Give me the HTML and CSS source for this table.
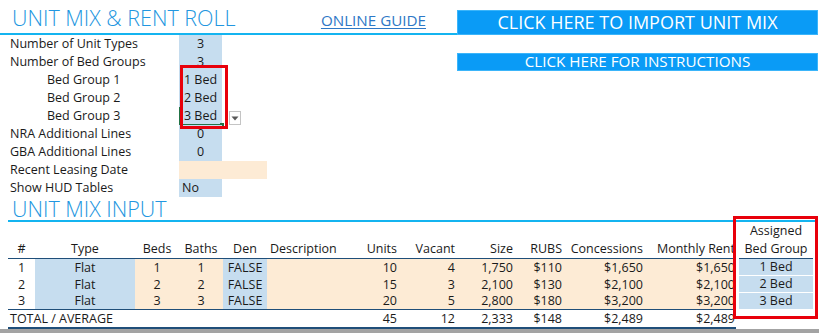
FILE: index.html
```html
<!DOCTYPE html>
<html>
<head>
<meta charset="utf-8">
<link rel="stylesheet" href="styles.css">
</head>
<body>
<div class="sheet">
  <div class="top">
    <div class="title-wrap">
      <h1 class="title">UNIT MIX &amp; RENT ROLL</h1>
      <a class="guide">ONLINE GUIDE</a>
    </div>
    <div class="btn btn-import">CLICK HERE TO IMPORT UNIT MIX</div>
  </div>

  <div class="params">
    <div class="param-grid">
      <div class="lbl">Number of Unit Types</div><div class="val blue">3</div><div></div>
      <div class="lbl">Number of Bed Groups</div><div class="val blue">3</div><div></div>
      <div class="lbl ind">Bed Group 1</div><div class="val blue">1 Bed</div><div></div>
      <div class="lbl ind">Bed Group 2</div><div class="val blue">2 Bed</div><div></div>
      <div class="lbl ind">Bed Group 3</div><div class="val blue active">3 Bed<span class="handle"></span></div><div></div>
      <div class="lbl">NRA Additional Lines</div><div class="val blue">0</div><div></div>
      <div class="lbl">GBA Additional Lines</div><div class="val blue">0</div><div></div>
      <div class="lbl">Recent Leasing Date</div><div class="val peach span2"></div>
      <div class="lbl">Show HUD Tables</div><div class="val blue left">No</div><div></div>
    </div>
    <div class="btn btn-instr">CLICK HERE FOR INSTRUCTIONS</div>
  </div>

  <h2 class="title2">UNIT MIX INPUT</h2>

  <div class="tbl">
    <div class="c sp" style="grid-column: 1 / 13"></div><div class="c"></div><div class="c ctr sp">Assigned</div>

    <div class="c h ctr">#</div><div class="c h ctr">Type</div><div class="c h ctr">Beds</div><div class="c h ctr">Baths</div><div class="c h ctr">Den</div><div class="c h desc">Description</div><div class="c h r">Units</div><div class="c h r">Vacant</div><div class="c h r">Size</div><div class="c h r">RUBS</div><div class="c h r">Concessions</div><div class="c h r last">Monthly Rent</div><div class="c"></div><div class="c h ctr">Bed Group</div>

    <div class="c ctr">1</div><div class="c ctr blue">Flat</div><div class="c ctr peach">1</div><div class="c ctr peach">1</div><div class="c ctr blue">FALSE</div><div class="c peach"></div><div class="c r peach">10</div><div class="c r peach">4</div><div class="c r peach">1,750</div><div class="c r peach">$110</div><div class="c r peach">$1,650</div><div class="c r peach last">$1,650</div><div class="c"></div><div class="c ctr blue sep">1 Bed</div>

    <div class="c ctr">2</div><div class="c ctr blue">Flat</div><div class="c ctr peach">2</div><div class="c ctr peach">2</div><div class="c ctr blue">FALSE</div><div class="c peach"></div><div class="c r peach">15</div><div class="c r peach">3</div><div class="c r peach">2,100</div><div class="c r peach">$130</div><div class="c r peach">$2,100</div><div class="c r peach last">$2,100</div><div class="c"></div><div class="c ctr blue sep">2 Bed</div>

    <div class="c ctr b3">3</div><div class="c ctr blue b3">Flat</div><div class="c ctr peach b3">3</div><div class="c ctr peach b3">3</div><div class="c ctr blue b3">FALSE</div><div class="c peach b3"></div><div class="c r peach b3">20</div><div class="c r peach b3">5</div><div class="c r peach b3">2,800</div><div class="c r peach b3">$180</div><div class="c r peach b3">$3,200</div><div class="c r peach b3 last">$3,200</div><div class="c"></div><div class="c ctr blue b3w">3 Bed</div>

    <div class="c tot totlbl" style="grid-column: 1 / 7">TOTAL / AVERAGE</div><div class="c r tot">45</div><div class="c r tot">12</div><div class="c r tot">2,333</div><div class="c r tot">$148</div><div class="c r tot">$2,489</div><div class="c r tot last">$2,489</div><div class="c"></div><div class="c"></div>
  </div>

  <div class="gray"></div>

  <div class="redbox rb1"></div>
  <div class="dropdown"><svg width="8" height="5" viewBox="0 0 8 5"><path d="M0.5 0.5 L7.5 0.5 L4 4.5 Z" fill="#595959"/></svg></div>
  <div class="redbox rb2"></div>
</div>
</body>
</html>
```

FILE: styles.css
```css
* { box-sizing: border-box; }
html, body { margin: 0; padding: 0; background: #fff; }
body {
  font-family: "Open Sans", "Noto Sans", sans-serif;
  font-size: 12.5px;
  color: #1a1a1a;
}
.sheet {
  position: relative;
  width: 819px;
  height: 333px;
  overflow: hidden;
}

.top {
  display: flex;
  height: 35px;
}
.title-wrap {
  width: 457px;
  height: 35px;
  border-bottom: 2px solid #14b4f0;
  display: flex;
  align-items: flex-end;
}
.title {
  margin: 0 0 0 12px;
  font-size: 21.5px;
  font-weight: 350;
  color: #2296e0;
  line-height: 30px;
}
.guide {
  margin-left: auto;
  margin-right: 31px;
  margin-bottom: 3px;
  font-size: 15.2px;
  color: #2e78c6;
  text-decoration: underline;
  text-decoration-thickness: 1px;
  text-underline-offset: 2px;
  line-height: 20px;
}
.btn {
  background: #0a9bf6;
  border: 1px solid #3bb5fa;
  color: #fff;
  text-align: center;
  font-weight: 400;
  white-space: nowrap;
}
.btn-import {
  width: 361px;
  height: 25px;
  margin-top: 10px;
  font-size: 18px;
  line-height: 22px;
}

.params {
  display: flex;
}
.param-grid {
  display: grid;
  grid-template-columns: 179px 43px 45px;
  grid-auto-rows: 18px;
  width: 457px;
}
.lbl {
  padding-left: 10px;
  line-height: 18px;
  white-space: nowrap;
}
.lbl.ind { padding-left: 47px; }
.val {
  line-height: 18px;
  text-align: center;
  position: relative;
}
.val.left { text-align: left; padding-left: 3px; }
.span2 { grid-column: span 2; }
.blue { background: #c6ddef; }
.peach { background: #fdebd5; }
.active {
  box-shadow: inset 2px 0 0 #217346, inset 0 -1px 0 #217346;
}
.handle {
  position: absolute;
  right: -2px;
  bottom: -2px;
  width: 4px;
  height: 4px;
  background: #217346;
}
.btn-instr {
  width: 361px;
  height: 18px;
  margin-top: 18px;
  font-size: 15.2px;
  line-height: 15px;
}

.title2 {
  margin: 0 0 0 8px;
  width: 807px;
  height: 25px;
  padding-left: 4px;
  border-bottom: 2px solid #14b4f0;
  font-size: 21.5px;
  font-weight: 350;
  color: #2296e0;
  line-height: 23px;
}

.tbl {
  display: grid;
  margin-left: 8px;
  grid-template-columns: 27px 100px 44px 44px 44px 78px 55px 58px 58px 49px 81px 90px 3px 74px;
  grid-template-rows: 18px 19px 17px 17px 17px 19px;
}
.c {
  white-space: nowrap;
  line-height: 17px;
}
.sp { line-height: 18px; }
.ctr { text-align: center; }
.r { text-align: right; padding-right: 3px; }
.r.last { padding-right: 1px; }
.desc { padding-left: 3px; }
.h {
  border-bottom: 1px solid #1f4e79;
  line-height: 18px;
}
.b3 { border-bottom: 1px solid #1f4e79; line-height: 16px; }
.sep { border-bottom: 1px solid #fff; line-height: 16px; }
.b3w { line-height: 16px; height: 16px; }
.tot {
  border-bottom: 2px solid #1f4e79;
  line-height: 17px;
}
.totlbl { padding-left: 2px; }

.gray {
  height: 4px;
  background: #a3a3a3;
}

.redbox {
  position: absolute;
  border: 3px solid #e8000b;
}
.rb1 { left: 180px; top: 65px; width: 48px; height: 64px; }
.rb2 { left: 733px; top: 216px; width: 85px; height: 103px; }
.dropdown {
  position: absolute;
  left: 229px;
  top: 111px;
  width: 12px;
  height: 14px;
  border: 1px solid #c4c4c4;
  background: #fff;
  display: flex;
  align-items: center;
  justify-content: center;
}
.dropdown svg { display: block; }
```
